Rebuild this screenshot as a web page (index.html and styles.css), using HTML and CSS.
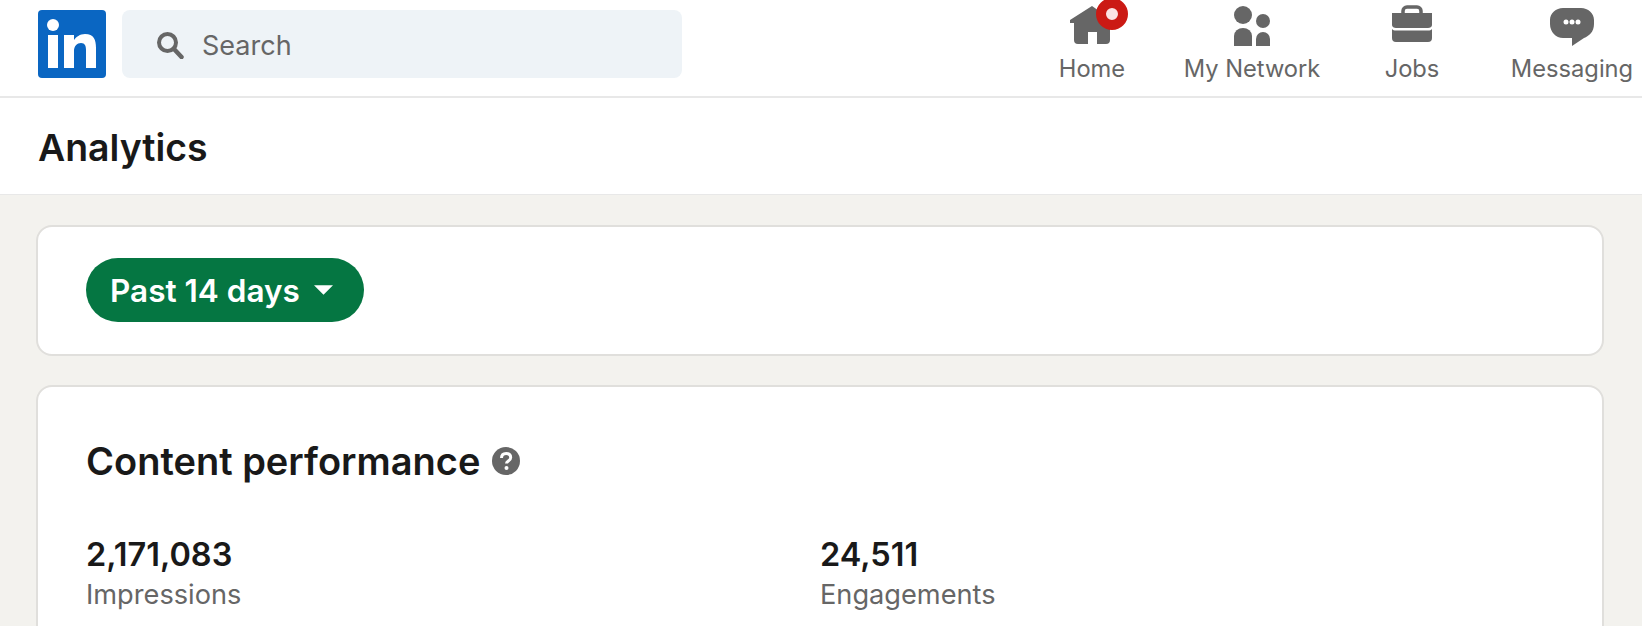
FILE: index.html
```html
<!DOCTYPE html>
<html lang="en">
<head>
    <title>Analytics</title>
    <meta name="viewport" content="width=device-width, initial-scale=1">
    <link rel="stylesheet" href="styles.css">
</head>
<body>
    <header class="top">
        <svg class="logo" viewBox="0 0 68 68">
            <rect width="68" height="68" rx="4" fill="#0a66c2"/>
            <circle cx="15" cy="15" r="6" fill="#fff"/>
            <rect x="10" y="25" width="10" height="33" fill="#fff"/>
            <path d="M26 25h10v5c2-3 6-6 11-6 9 0 11 6 11 14v20H48V40c0-4-1-7-5-7s-7 3-7 8v17H26z" fill="#fff"/>
        </svg>
        <div class="search">
            <svg class="search-icon" viewBox="0 0 28 28">
                <circle cx="11.5" cy="11.5" r="8.5" fill="none" stroke="#666" stroke-width="4"/>
                <path d="M18 18l7.5 8" fill="none" stroke="#666" stroke-width="4.5" stroke-linecap="round"/>
            </svg>
            <span>Search</span>
        </div>
        <nav class="nav">
            <a class="nav-item">
                <span class="nav-icon">
                    <svg viewBox="0 0 48 48" width="48" height="48">
                        <path d="M24 6L44 20v3h-2v17a4 4 0 0 1-4 4h-9V32h-9v12h-10a4 4 0 0 1-4-4V23H2v-3z" fill="#666"/>
                    </svg>
                    <span class="badge"></span>
                </span>
                Home
            </a>
            <a class="nav-item">
                <span class="nav-icon">
                    <svg viewBox="0 0 48 48" width="48" height="48">
                        <circle cx="15" cy="15" r="9" fill="#666"/>
                        <path d="M6 46V36a9 8 0 0 1 18 0v10z" fill="#666"/>
                        <circle cx="35" cy="21" r="7" fill="#666"/>
                        <path d="M28 46V39a7 7 0 0 1 14 0v7z" fill="#666"/>
                    </svg>
                </span>
                My Network
            </a>
            <a class="nav-item">
                <span class="nav-icon">
                    <svg viewBox="0 0 48 48" width="48" height="48">
                        <path d="M15 13v-2a4 4 0 0 1 4-4h10a4 4 0 0 1 4 4v2" fill="none" stroke="#666" stroke-width="3.5"/>
                        <path d="M4 13h40v12c0 2-2 3-4 3H8c-2 0-4-1-4-3z" fill="#666"/>
                        <path d="M4 29c1 1 2 1.5 4 1.5h32c2 0 3-.5 4-1.5v9a4 4 0 0 1-4 4H8a4 4 0 0 1-4-4z" fill="#666"/>
                    </svg>
                </span>
                Jobs
            </a>
            <a class="nav-item">
                <span class="nav-icon">
                    <svg viewBox="0 0 48 48" width="48" height="48">
                        <path d="M15 8h18c7 0 13 5 13 12v4c0 8-5 12-10 14L24 46v-8h-9C8 38 2 32 2 24v-4C2 13 8 8 15 8z" fill="#666"/>
                        <circle cx="18" cy="22" r="2.5" fill="#fff"/>
                        <circle cx="24" cy="22" r="2.5" fill="#fff"/>
                        <circle cx="30" cy="22" r="2.5" fill="#fff"/>
                    </svg>
                </span>
                Messaging
            </a>
        </nav>
    </header>

    <div class="subhead">
        <h1>Analytics</h1>
    </div>

    <main class="page">
        <section class="card filter-card">
            <button class="pill">
                Past 14 days
                <svg viewBox="0 0 20 10" width="19" height="10"><path d="M0 0h20L10 10z" fill="#fff"/></svg>
            </button>
        </section>

        <section class="card perf-card">
            <div class="perf-title">
                <h2>Content performance</h2>
                <svg viewBox="0 0 28 28" width="28" height="28">
                    <circle cx="14" cy="14" r="14" fill="#666"/>
                    <path d="M9.5 11c0-3 2-4.500 4.700-4.500s4.500 1.500 4.500 4c0 3.500-4.200 3.500-4.200 6" fill="none" stroke="#fff" stroke-width="3"/>
                    <circle cx="14.5" cy="21" r="2" fill="#fff"/>
                </svg>
            </div>
            <div class="stats">
                <div class="stat">
                    <strong>2,171,083</strong>
                    <span>Impressions</span>
                </div>
                <div class="stat">
                    <strong>24,511</strong>
                    <span>Engagements</span>
                </div>
            </div>
        </section>
    </main>
</body>
</html>
```

FILE: styles.css
```css
:root {
    --dark: #191919;
    --gray: #666;
    --line: #e0dfdc;
}

html, body {
    margin: 0;
    padding: 0;
    height: 626px;
    overflow: hidden;
    background-color: #f3f2ee;
    font-family: Inter, "Liberation Sans", sans-serif;
    color: var(--dark);
}

/* Top bar */
.top {
    display: flex;
    align-items: flex-start;
    box-sizing: border-box;
    height: 98px;
    padding: 10px 0 0 38px;
    background-color: #fff;
    border-bottom: 2px solid #e8e8e8;
}

.logo {
    width: 68px;
    height: 68px;
    flex: none;
}

.search {
    display: flex;
    flex: none;
    align-items: center;
    gap: 18px;
    box-sizing: border-box;
    width: 560px;
    height: 68px;
    margin-left: 16px;
    padding: 2px 0 0 34px;
    background-color: #eef3f7;
    border-radius: 8px;
    font-size: 27px;
    color: var(--gray);
}

.search-icon {
    width: 28px;
    height: 28px;
}

.nav {
    display: flex;
    flex: none;
    margin: -10px 0 0 330px;
}

.nav-item {
    display: flex;
    flex-direction: column;
    align-items: center;
    width: 160px;
    font-size: 23.7px;
    line-height: 30px;
    color: var(--gray);
}

.nav-icon {
    position: relative;
    display: block;
    width: 48px;
    height: 48px;
    margin-bottom: 6px;
}

.nav-icon svg {
    display: block;
}

.badge {
    position: absolute;
    top: -2px;
    left: 28px;
    width: 12px;
    height: 12px;
    border: 10px solid #cb1a14;
    border-radius: 50%;
    background-color: #fbe3e3;
}

/* Title bar */
.subhead {
    display: flex;
    align-items: center;
    box-sizing: border-box;
    height: 97px;
    padding: 2px 0 0 38px;
    background-color: #fff;
    border-bottom: 1px solid #e8e8e8;
}

h1 {
    margin: 0;
    font-size: 37.4px;
    font-weight: 600;
}

/* Cards */
.page {
    display: flex;
    flex-direction: column;
    gap: 29px;
    padding: 30px 38px 0 36px;
}

.card {
    box-sizing: border-box;
    background-color: #fff;
    border: 2px solid var(--line);
    border-radius: 16px;
    padding: 0 48px;
}

.filter-card {
    height: 131px;
    padding-top: 31px;
}

.pill {
    display: flex;
    align-items: center;
    gap: 14px;
    height: 64px;
    padding: 0 31px 0 24px;
    border: none;
    border-radius: 32px;
    background-color: #057642;
    color: #fff;
    font-family: inherit;
    font-size: 31.5px;
    font-weight: 600;
}

.perf-card {
    height: 400px;
    padding-top: 52px;
}

.perf-title {
    display: flex;
    align-items: center;
    gap: 12px;
}

h2 {
    margin: 0;
    font-size: 38px;
    line-height: 44px;
    font-weight: 600;
}

.stats {
    display: grid;
    grid-template-columns: 734px 1fr;
    margin-top: 53px;
}

.stat {
    display: flex;
    flex-direction: column;
}

.stat strong {
    font-size: 32.5px;
    line-height: 38px;
    font-weight: 600;
}

.stat span {
    font-size: 27.2px;
    line-height: 41px;
    color: var(--gray);
}
```
